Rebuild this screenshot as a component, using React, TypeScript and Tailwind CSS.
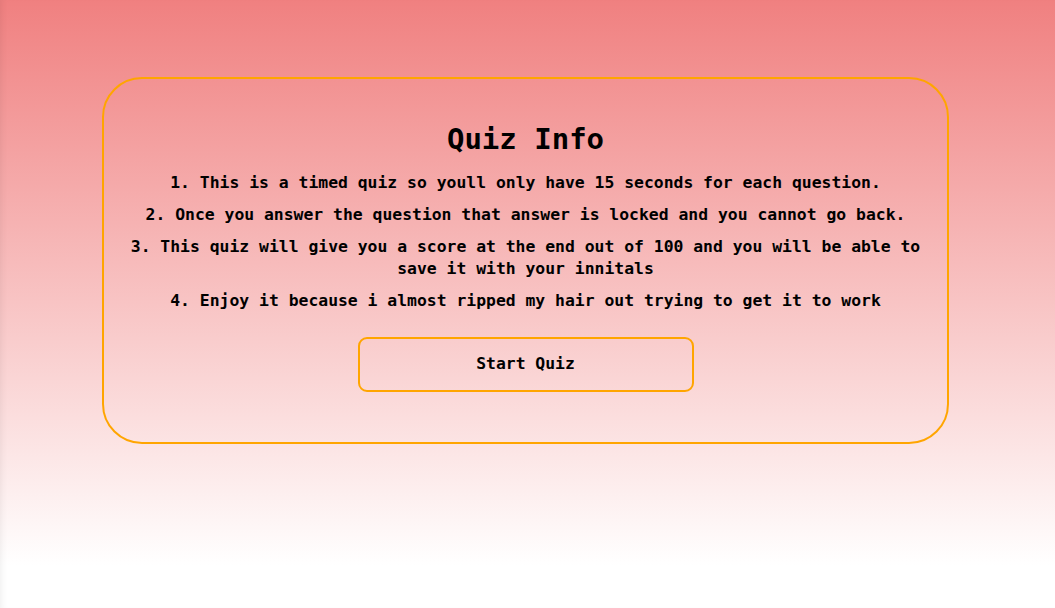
const rules = [
  "1. This is a timed quiz so youll only have 15 seconds for each question.",
  "2. Once you answer the question that answer is locked and you cannot go back.",
  "3. This quiz will give you a score at the end out of 100 and you will be able to save it with your innitals",
  "4. Enjoy it because i almost ripped my hair out trying to get it to work",
];

export default function App() {
  return (
    <div className="min-h-screen h-[608px] bg-[linear-gradient(to_bottom,#f08080_0%,#ffffff_93%)] shadow-[inset_6px_0_6px_-4px_rgba(0,0,0,0.06)] pt-[77px] font-['DejaVu_Sans_Mono',monospace] text-black">
      <div className="ml-[102px] w-[847px] h-[367px] rounded-[40px] border-2 border-[#ffa500] px-6 pt-[40px] flex flex-col items-center">
        <h1 className="text-[29px] leading-[40px] font-bold mb-[13px]">Quiz Info</h1>
        <div className="flex flex-col gap-[10px] text-center text-[16.4px] leading-[22px] font-bold">
          {rules.map((rule) => (
            <p key={rule}>{rule}</p>
          ))}
        </div>
        <button
          type="button"
          className="mt-[25px] w-[336px] h-[55px] rounded-[9px] border-2 border-[#ffa500] text-[16.4px] font-bold"
        >
          Start Quiz
        </button>
      </div>
    </div>
  );
}
